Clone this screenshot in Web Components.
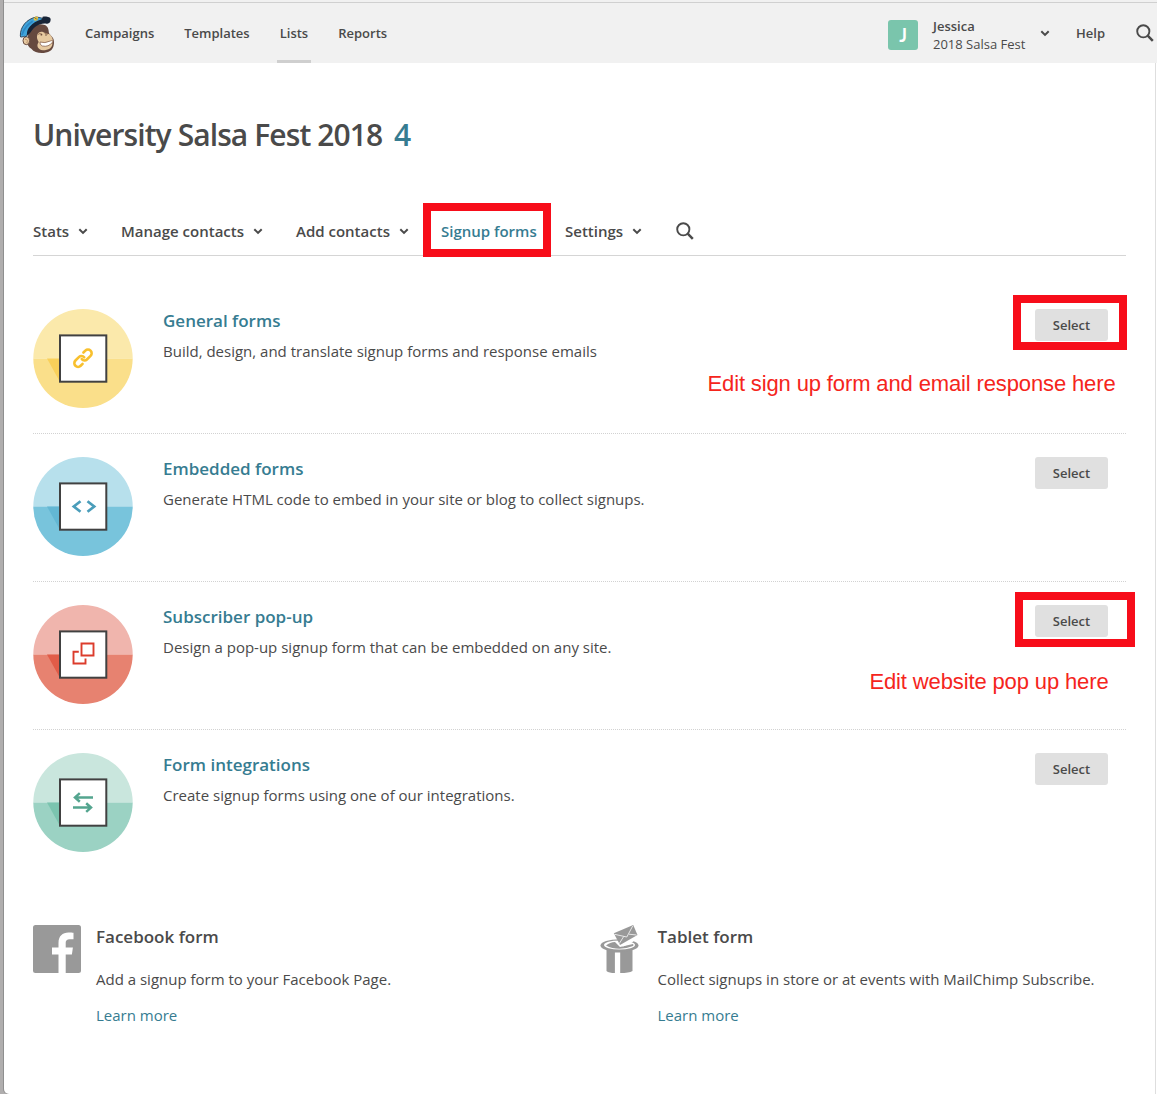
<!DOCTYPE html>
<html lang="en"><head><meta charset="utf-8"><title>Signup forms</title>
<style>
body{margin:0;font-family:"Open Sans",sans-serif;color:#4a4a4a;background:#fff}
</style></head><body>
<app-window>
  <top-bar slot="bar"></top-bar>
  <page-title count="4">University Salsa Fest 2018</page-title>
  <section-nav></section-nav>
  <form-row icon="link" marked note="Edit sign up form and email response here"><span slot="title">General forms</span><span slot="text">Build, design, and translate signup forms and response emails</span></form-row>
  <form-row icon="code"><span slot="title">Embedded forms</span><span slot="text">Generate HTML code to embed in your site or blog to collect signups.</span></form-row>
  <form-row icon="popup" marked wide note="Edit website pop up here"><span slot="title">Subscriber pop-up</span><span slot="text">Design a pop-up signup form that can be embedded on any site.</span></form-row>
  <form-row icon="swap"><span slot="title">Form integrations</span><span slot="text">Create signup forms using one of our integrations.</span></form-row>
  <promo-list>
    <promo-card icon="facebook"><span slot="title">Facebook form</span><span slot="text">Add a signup form to your Facebook Page.</span></promo-card>
    <promo-card icon="hat"><span slot="title">Tablet form</span><span slot="text">Collect signups in store or at events with MailChimp Subscribe.</span></promo-card>
  </promo-list>
</app-window>
<script>
const define=(name,render)=>customElements.define(name,class extends HTMLElement{
  connectedCallback(){ if(!this.shadowRoot) this.attachShadow({mode:'open'}).innerHTML=render(this); }
});

define('app-window',()=>`<style>
:host{display:block;box-sizing:border-box;height:1094px;background:#b0aeae;padding-left:4px;overflow:hidden}
.win{box-sizing:border-box;height:1094px;background:#fff;border-radius:0 0 0 5px;box-shadow:-1px 0 0 #8f8f8f;overflow:hidden;display:flex;flex-direction:column}
main{flex:1;box-sizing:border-box;margin-right:1px;border-right:1px solid #dedede;padding:0 29px}
</style><div class="win"><slot name="bar"></slot><main><slot></slot></main></div>`);

define('chevron-icon',()=>`<style>:host{display:block;width:10px;height:8px}svg{display:block}</style>
<svg width="10" height="8" viewBox="0 0 10 8"><path d="M1.300 2.200 5 5.900 8.700 2.200" fill="none" stroke="#4a4a4a" stroke-width="2"/></svg>`);

define('search-icon',()=>`<style>:host{display:block;width:18px;height:18px}svg{display:block}</style>
<svg width="18" height="18" viewBox="0 0 18 18"><circle cx="7.3" cy="7.3" r="6.1" fill="none" stroke="#4a4a4a" stroke-width="1.9"/><path d="M11.7 11.7 16.8 16.8" stroke="#4a4a4a" stroke-width="2.5"/></svg>`);

define('brand-logo',()=>`<style>:host{display:block;width:50px;height:50px}svg{display:block}</style>
<svg width="50" height="50" viewBox="0 0 150 150">
<path d="M54 78C56 52 80 37 104 45 115 49 116 60 117 70L129 84C135 96 132 116 120 123 102 133 75 131 64 116 56 112 52 103 50 95Z" fill="#66493f"/>
<path d="M82 74C86 64 98 63 105 70L119 73C129 84 130 91 127 99 129 113 115 121 99 121 83 119 78 107 86 96 82 88 79 82 82 74Z" fill="#e6c9a0"/>
<ellipse cx="49" cy="92" rx="10" ry="12" fill="#e6c9a0" stroke="#66493f" stroke-width="3"/>
<path d="M45 88C52 86 54 93 50 99" fill="none" stroke="#b98f6c" stroke-width="3"/>
<path d="M31 78C30 52 49 26 80 21L98 25 92 38C74 43 57 57 49 80 42 77 37 82 32 81Z" fill="#3fa4db" stroke="#2f4860" stroke-width="3"/>
<path d="M36 75C41 58 50 44 68 34" fill="none" stroke="#2d87c4" stroke-width="5"/>
<path d="M52 77C46 60 66 35 96 28L98 20C108 18 122 20 122 28 122 38 117 42 110 41 89 38 72 50 62 67Z" fill="#182437"/>
<path d="M70 26 77 19 85 22 82 31 74 32Z" fill="#e9be3e"/><path d="m75 23 5 5" stroke="#356454" stroke-width="3"/>
<path d="M90 96Q104 101 121 93 132 89 127 97 116 112 97 108 88 104 90 96Z" fill="#fff" stroke="#8b6652" stroke-width="2.500"/>
<path d="M84 73Q91 67 97 74M104 70q5-2 8 4" fill="none" stroke="#9b7456" stroke-width="3"/><circle cx="94" cy="74" r="2.500" fill="#6b4c3d"/><circle cx="108" cy="75" r="2.500" fill="#6b4c3d"/>
</svg>`);

define('top-bar',()=>`<style>
:host{display:flex;box-sizing:border-box;height:63px;background:#f1f1f1;font-weight:600;font-size:13px;line-height:18px}
.in{box-sizing:border-box;width:100%;margin-top:2px;border-top:1px solid #d0d0d0;display:flex;align-items:center;padding-left:6px}
brand-logo{margin-top:3px}
nav{display:flex;gap:24px;height:60px;margin-left:22px}
nav span{box-sizing:border-box;padding:0 3px;height:60px;border-bottom:3px solid transparent;line-height:61px}
nav .on{border-color:#cfcfcf}
.who{margin-left:auto;display:flex;align-items:center}
.av{width:30px;height:30px;border-radius:3px;background:#7ac5ac;color:#fff;display:flex;align-items:center;justify-content:center;font:700 18px/31px Lato,sans-serif;margin-top:4px}
.nm{margin-left:15px;width:93px;margin-top:4px}.nm div+div{font-weight:400}
chevron-icon{margin-left:14px}.help{margin-left:26px;width:29px}search-icon{margin:0 3px 0 31px}
</style><div class="in"><brand-logo></brand-logo><nav><span>Campaigns</span><span>Templates</span><span class="on">Lists</span><span>Reports</span></nav>
<div class="who"><div class="av">J</div><div class="nm"><div>Jessica</div><div>2018 Salsa Fest</div></div><chevron-icon></chevron-icon><div class="help">Help</div><search-icon></search-icon></div></div>`);

define('page-title',e=>`<style>
:host{display:flex;margin-top:51px;height:42px;font-size:30px;line-height:42px;font-weight:600;letter-spacing:-.91px;white-space:nowrap}
span{width:361px}b{font-weight:600;color:#367c91}</style><span><slot></slot></span><b>${e.getAttribute('count')}</b>`);

define('section-nav',()=>`<style>
:host{display:flex;align-items:center;box-sizing:border-box;height:49px;margin-top:51px;border-bottom:1px solid #d5d5d5;font-size:15px;font-weight:600;line-height:48px;white-space:nowrap}
div{display:flex;align-items:center}chevron-icon{margin-left:9px}
.on{position:relative;color:#367c91}
.on::after{content:"";position:absolute;left:-18px;top:-4px;width:112px;height:38px;border:8px solid #f70d1a;z-index:2}
</style><div style="width:88px">Stats<chevron-icon></chevron-icon></div><div style="width:175px">Manage contacts<chevron-icon></chevron-icon></div><div style="width:145px">Add contacts<chevron-icon></chevron-icon></div><div class="on" style="width:124px">Signup forms</div><div style="width:110.500px">Settings<chevron-icon></chevron-icon></div><search-icon></search-icon>`);

const badges={
link:['#fbe9ab','#fadf8a','#f9d05a',`<g transform="translate(50 49.200) rotate(-45)" fill="none" stroke="#f8c02e" stroke-width="2.600" stroke-linecap="round"><path d="M4.300-3.700H7A3.700 3.700 0 0 1 7 3.700H1.800C0 3.700-1.700 2-1.500-.2"/><path d="M-4.300 3.700H-7A3.700 3.700 0 0 1-7-3.700H-1.800C0-3.700 1.700-2 1.500 .2"/></g>`],
code:['#b7e0ec','#78c4dc','#63b7d3',`<path d="M47.500 44.200 40.800 49.500l6.700 5.300M54.500 44.200 61.200 49.500l-6.700 5.300" fill="none" stroke="#4a9dba" stroke-width="2.700"/>`],
popup:['#f0b5ad','#e78270','#e15c48',`<path d="M48.500 38.500h12v12h-12zM45.800 46.700h-5.300v11.800h12V53.500" fill="none" stroke="#dc3c2c" stroke-width="1.900"/>`],
swap:['#c9e6dd','#9bd2c3','#7bc4af',`<path d="M60 44.400H42M46.800 40.100 42 44.400l4.800 4.300M40 54.600H58M53.200 50.300 58 54.600l-4.800 4.300" fill="none" stroke="#54a58f" stroke-width="2.500"/>`]};
define('form-badge',e=>{const [a,b,c,g]=badges[e.getAttribute('icon')];return `<style>:host{display:block;width:100px;height:100px}svg{display:block}</style>
<svg width="100" height="100" viewBox="0 0 100 100"><path d="M.3 49.500a49.700 49.500 0 0 1 99.400 0z" fill="${a}"/><path d="M.3 49.500a49.700 49.500 0 0 0 99.400 0z" fill="${b}"/><path d="M14 49.500H27V73Z" fill="${c}"/><rect x="27" y="26.400" width="46.300" height="46.300" fill="#fff" stroke="#414141" stroke-width="2"/>${g}</svg>`});

define('form-row',e=>`<style>
:host{display:flex;position:relative;box-sizing:border-box;height:148px;padding-top:23px;border-bottom:1px dotted #d2d2d2}
:host(:nth-of-type(1)){margin-top:30px}
:host([icon=swap]){border-color:transparent}
.c{flex:1;margin-left:30px}
.t{font-size:17px;line-height:24px;font-weight:600;color:#367c91}
.d{font-size:15px;line-height:22px;margin-top:7px}
.btn{position:relative;width:73px;height:32px;border-radius:3px;background:#e0e0e0;font-size:13px;font-weight:600;line-height:32px;text-align:center;margin-right:18px}
:host([marked]) .btn::after{content:"";position:absolute;left:-22px;top:-14px;width:98px;height:39px;border:8px solid #f70d1a}
:host([wide]) .btn::after{left:-20px;top:-13px;width:104px}
.note{position:absolute;right:10.500px;top:84px;font:22px/28px "Liberation Sans",sans-serif;letter-spacing:-.13px;color:#f5251c;white-space:nowrap}
:host([wide]) .note{right:17.500px;top:86px}
</style><form-badge icon="${e.getAttribute('icon')}"></form-badge><div class="c"><div class="t"><slot name="title"></slot></div><div class="d"><slot name="text"></slot></div></div><div class="btn">Select</div>${e.hasAttribute('note')?`<div class="note">${e.getAttribute('note')}</div>`:''}`);

define('promo-list',()=>`<style>:host{display:grid;grid-template-columns:561.5px 1fr;margin-top:47px}</style><slot></slot>`);
const art={
facebook:`<svg width="48" height="48" viewBox="0 0 48 48"><rect width="48" height="48" rx="2.500" fill="#999"/><path d="M25.500 48V29.500H19V22.500h6.500V18c0-7 4-10.500 10-10.500 2 0 4 .1 5 .3v6.500h-4c-2.500 0-3.800 1.300-3.800 3.500v4.700h7.200l-1 7H32.700V48z" fill="#fff"/></svg>`,
hat:`<svg width="48" height="48" viewBox="0 0 48 48"><path d="M11.500 23Q24.500 28 37.500 23V46Q34 48 25.200 48V27.500H19.900V48Q14 48 11.500 46Z" fill="#999"/><ellipse cx="24.500" cy="20.500" rx="19" ry="6.300" fill="#999"/><ellipse cx="24.500" cy="20" rx="15.500" ry="4.500" fill="#fff"/><path d="M11 20.500Q15 17 20 17L25 22 38 19Q39 20 38 21 31 23.800 24.500 23.800 17 23.800 11 20.500Z" fill="#999"/><path d="M21 16.500 28 21.500 38.500 16.500 37 12Z" fill="#fff"/><path d="M18.800 8.300 38.200 0 42.500 10 25 20Z" fill="#999"/><path d="M19.500 9.300 31.800 12 37.700 1M24.300 18.500 28.700 11.500M34 9.200 41.500 10" fill="none" stroke="#fff" stroke-width=".75"/></svg>`};
define('promo-card',e=>`<style>
:host{display:flex}.i{width:48px;height:48px;margin-right:15px}svg{display:block}
.t{font-size:17px;line-height:24px;font-weight:600}.d{font-size:15px;line-height:22px;margin-top:19px;white-space:nowrap}.l{font-size:15px;line-height:22px;margin-top:14px;color:#367c91}
</style><div class="i">${art[e.getAttribute('icon')]}</div><div><div class="t"><slot name="title"></slot></div><div class="d"><slot name="text"></slot></div><div class="l">Learn more</div></div>`);
</script>
</body></html>
